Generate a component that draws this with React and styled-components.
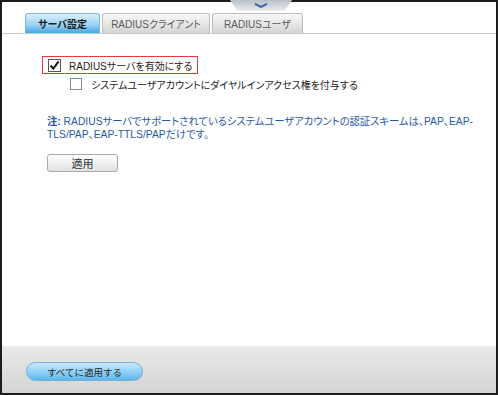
import React from "react";
import styled, { createGlobalStyle } from "styled-components";

const GlobalStyle = createGlobalStyle`
  html, body {
    margin: 0;
    padding: 0;
    background: #ffffff;
  }
  body {
    font-family: "Liberation Sans", "Noto Sans CJK JP", sans-serif;
    font-feature-settings: "palt";
  }
`;

const Frame = styled.div`
  position: relative;
  width: 498px;
  height: 395px;
  box-sizing: border-box;
  border: 2px solid #1c1c1c;
  display: flex;
  flex-direction: column;
  background: #fff;
`;

const Handle = styled.div`
  position: absolute;
  top: -2px;
  left: 228px;
  width: 62px;
  height: 11px;
  background: linear-gradient(#b9c0c8, #e9ecef);
  clip-path: polygon(0 0, 100% 0, 88% 100%, 12% 100%);
  display: flex;
  justify-content: center;
  align-items: flex-start;
  padding-top: 3px;
  box-sizing: border-box;
`;

const TabBar = styled.div`
  display: flex;
  gap: 2px;
  padding: 11px 0 0 23px;
  border-bottom: 1px solid #c9c9c9;
`;

const Tab = styled.div`
  width: ${(p) => p.$w}px;
  height: 20px;
  box-sizing: border-box;
  display: flex;
  align-items: center;
  justify-content: center;
  font-size: 10px;
  border-radius: 3px 3px 0 0;
  border: 1px solid ${(p) => (p.$active ? "#7fb7dc" : "#bdbdbd")};
  border-bottom: none;
  background: ${(p) =>
    p.$active
      ? "linear-gradient(#d9effc, #9fd3f4 55%, #45a8e2)"
      : "linear-gradient(#f7f7f7, #e4e4e4 60%, #d4d4d4)"};
  color: ${(p) => (p.$active ? "#1c1c1c" : "#5a5a5a")};
  font-weight: ${(p) => (p.$active ? "bold" : "normal")};
`;

const Main = styled.div`
  flex: 1;
  display: flex;
  flex-direction: column;
  align-items: flex-start;
  padding: 22px 0 0 40px;
`;

const Option = styled.label`
  display: inline-flex;
  align-items: center;
  gap: ${(p) => (p.$boxed ? 8 : 9)}px;
  height: 18px;
  box-sizing: border-box;
  margin-left: ${(p) => (p.$indent ? 27 : 0)}px;
  padding: 0 ${(p) => (p.$boxed ? 5 : 0)}px;
  border: ${(p) => (p.$boxed ? "1px solid #e23c3c" : "1px solid transparent")};
  font-size: 10px;
  color: #222;
  margin-bottom: 1px;
`;

const Box = styled.span`
  width: ${(p) => p.$size}px;
  height: ${(p) => p.$size}px;
  box-sizing: border-box;
  border: 1px solid ${(p) => (p.$checked ? "#555" : "#8a8a8a")};
  background: #fff;
  display: flex;
  align-items: center;
  justify-content: center;
`;

const Note = styled.p`
  margin: 21px 0 0 5px;
  font-size: 10.3px;
  line-height: 13px;
  color: #1f5aa8;
`;

const Strong = styled.b`
  font-weight: bold;
`;

const ApplyButton = styled.button`
  margin: 13px 0 0 5px;
  width: 71px;
  height: 18px;
  padding: 0;
  border: 1px solid #a9a9a9;
  border-radius: 3px;
  background: linear-gradient(#ffffff, #f1f1f1 50%, #e2e2e2);
  font-family: inherit;
  font-size: 11px;
  color: #333;
`;

const Footer = styled.div`
  height: 46px;
  border-top: 1px solid #ececec;
  background: linear-gradient(#e9e9e9, #d4d4d4);
  display: flex;
  align-items: center;
  padding: 0 0 0 24px;
`;

const AllButton = styled.button`
  width: 117px;
  height: 19px;
  padding: 0;
  margin-top: 3px;
  border: 1px solid #7aaed4;
  border-radius: 10px;
  background: linear-gradient(#c8e9fd, #8ed0f7 55%, #5bb6ee);
  font-family: inherit;
  font-size: 9.5px;
  color: #2a2a2a;
`;

const Check = () => (
  <svg width="11" height="11" viewBox="0 0 11 11">
    <path d="M1.5 5.5 L4.3 8.6 L9.6 1.4" fill="none" stroke="#1a1a1a" strokeWidth="2" />
  </svg>
);

const Chevron = () => (
  <svg width="14" height="5" viewBox="0 0 14 5">
    <path d="M1 0.8 L7 4 L13 0.8" fill="none" stroke="#3a6aa0" strokeWidth="2" />
  </svg>
);

export default function App() {
  return (
    <>
      <GlobalStyle />
      <Frame>
        <Handle>
          <Chevron />
        </Handle>
        <TabBar>
          <Tab $w={75} $active>サーバ設定</Tab>
          <Tab $w={108}>RADIUSクライアント</Tab>
          <Tab $w={91}>RADIUSユーザ</Tab>
        </TabBar>
        <Main>
          <Option $boxed>
            <Box $size={13} $checked>
              <Check />
            </Box>
            RADIUSサーバを有効にする
          </Option>
          <Option $indent>
            <Box $size={12} />
            システムユーザアカウントにダイヤルインアクセス権を付与する
          </Option>
          <Note>
            <Strong>注:</Strong> RADIUSサーバでサポートされているシステムユーザアカウントの認証スキームは、PAP、EAP-
            <br />
            TLS/PAP、EAP-TTLS/PAPだけです。
          </Note>
          <ApplyButton>適用</ApplyButton>
        </Main>
        <Footer>
          <AllButton>すべてに適用する</AllButton>
        </Footer>
      </Frame>
    </>
  );
}
